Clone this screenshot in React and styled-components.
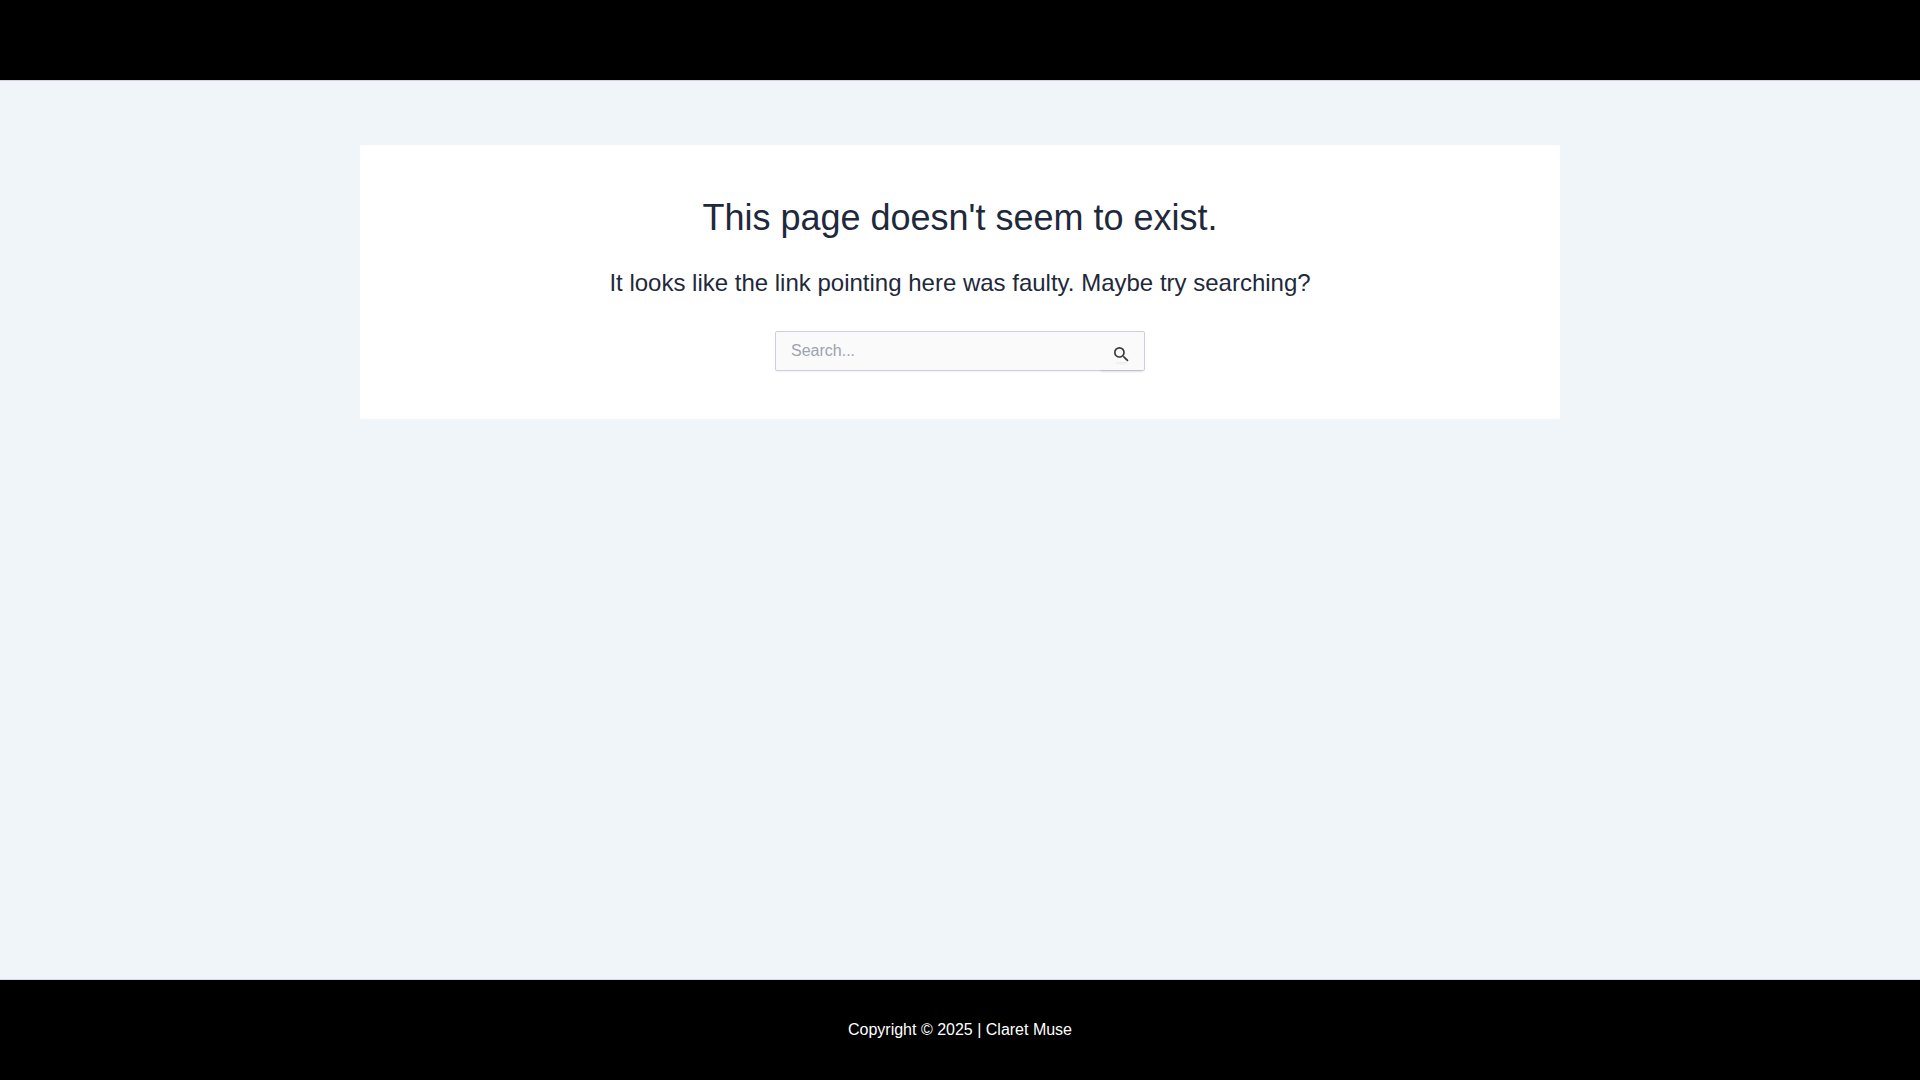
import React from 'react';
import styled, { createGlobalStyle } from 'styled-components';

const GlobalStyle = createGlobalStyle`
  * {
    box-sizing: border-box;
  }

  body {
    margin: 0;
    background: #f0f5fa;
    color: #334155;
    font-family: "Liberation Sans", Arial, sans-serif;
    font-size: 16px;
  }
`;

const Page = styled.div`
  display: flex;
  flex-direction: column;
  min-height: 100vh;
`;

const Header = styled.header`
  height: 81px;
  background: #000;
  border-bottom: 1px solid #d6d1e0;
`;

const Content = styled.main`
  flex: 1;
  width: 100%;
  max-width: 1240px;
  margin: 0 auto;
  padding: 64px 20px;
`;

const NotFound = styled.section`
  display: flex;
  flex-direction: column;
  align-items: center;
  padding: 48px;
  background: #fff;
  text-align: center;
`;

const Title = styled.h1`
  margin: 0;
  color: #1e293b;
  font-size: 36px;
  font-weight: 400;
  line-height: 50px;
`;

const Subtitle = styled.div`
  margin: 16px 0 24px;
  color: #1e293b;
  font-size: 24px;
  line-height: 48px;
`;

const SearchForm = styled.form`
  display: flex;
  width: 100%;
  max-width: 370px;
  height: 40px;
  border: 1px solid #cbd0dc;
  border-radius: 2px;
  background: #fafafa;
  box-shadow: 0 1px 2px rgba(0, 0, 0, 0.05);
`;

const SearchInput = styled.input`
  flex: 1;
  min-width: 0;
  padding: 0 15px;
  border: 0;
  outline: 0;
  background: transparent;
  color: #666;
  font: inherit;

  &::placeholder {
    color: #9ca3af;
    opacity: 1;
  }
`;

const SearchButton = styled.button`
  display: flex;
  align-items: center;
  justify-content: center;
  width: 45px;
  padding: 6px 0 0;
  border: 0;
  background: transparent;
  color: #3a3a3a;
  cursor: pointer;
  box-shadow: 0 4px 2px -2px rgba(0, 0, 0, 0.08);
`;

const SearchIcon = styled.svg`
  width: 15px;
  height: 15px;
  box-shadow: 0 4px 2px -2px rgba(0, 0, 0, 0.05);
`;

const Footer = styled.footer`
  display: flex;
  align-items: center;
  justify-content: center;
  height: 101px;
  border-top: 1px solid #d5dbe0;
  background: #000;
  color: #fff;
`;

const App = () => {
    return(
        <Page>
            <GlobalStyle />
            <Header />
            <Content>
                <NotFound>
                    <Title>This page doesn't seem to exist.</Title>
                    <Subtitle>It looks like the link pointing here was faulty. Maybe try searching?</Subtitle>
                    <SearchForm role='search' onSubmit={(e) => e.preventDefault()}>
                        <SearchInput type='search' aria-label='Search' placeholder='Search...' />
                        <SearchButton type='submit' aria-label='Search'>
                            <SearchIcon viewBox='3 3 18 18' fill='currentColor'>
                                <path d='M15.5 14h-.79l-.28-.27A6.47 6.47 0 0 0 16 9.5 6.5 6.5 0 1 0 9.5 16c1.61 0 3.09-.59 4.23-1.57l.27.28v.79l5 4.99L20.49 19l-4.99-5zm-6 0C7.01 14 5 11.99 5 9.5S7.01 5 9.5 5 14 7.01 14 9.5 11.99 14 9.5 14z' />
                            </SearchIcon>
                        </SearchButton>
                    </SearchForm>
                </NotFound>
            </Content>
            <Footer>Copyright © 2025 | Claret Muse</Footer>
        </Page>
    )
}

export default App;
